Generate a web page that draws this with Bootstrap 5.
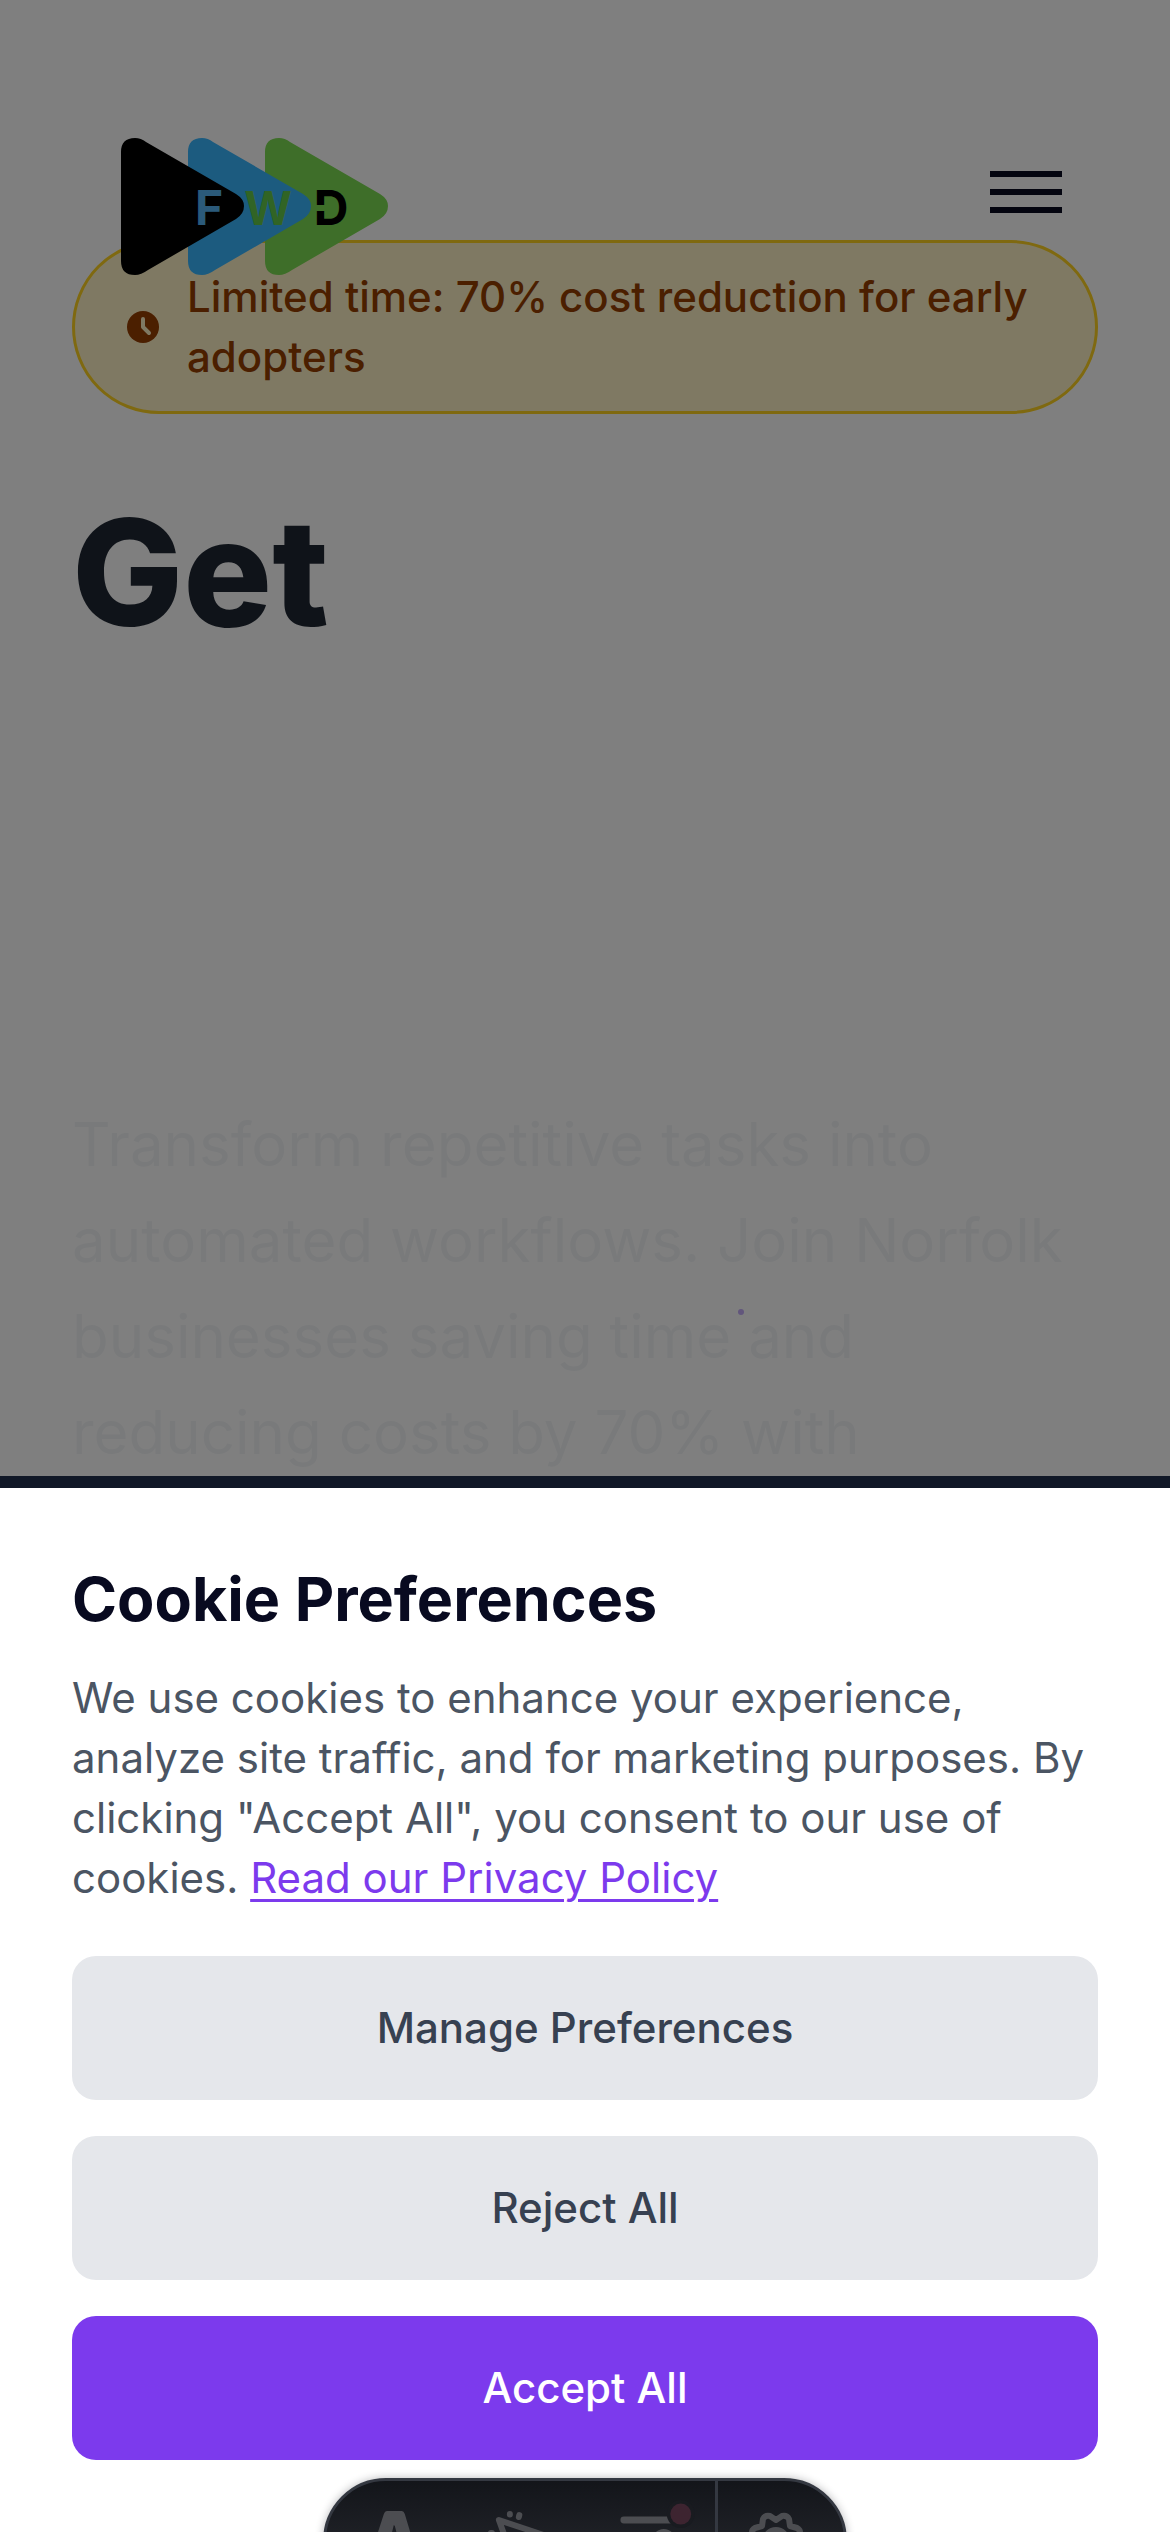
<!DOCTYPE html>
<html lang="en">
<head>
<meta charset="utf-8">
<meta name="viewport" content="width=device-width, initial-scale=1">
<title>FWD</title>
<link href="https://cdn.jsdelivr.net/npm/bootstrap@5.3.0/dist/css/bootstrap.min.css" rel="stylesheet">
<style>
  body { font-family: Inter, "Liberation Sans", sans-serif; font-size: 42px; line-height: 60px; background: #fff; min-height: 100vh; overflow: hidden; }
  .site-bar { padding: 137px 108px 0 120px; z-index: 5; }
  .brand-art { width: 269px; height: 139px; display: block; }
  .menu-btn { padding: 0; border: 0; background: none; gap: 12px; margin-top: 34px; }
  .menu-btn span { width: 72px; height: 6px; background: #080a20; }
  .page-main { padding: 240px 72px 0; }
  .offer-pill { border: 3px solid #ffd220; background: #fff3c7; color: #963e00; border-radius: 90px; padding: 24px 48px 24px 51px; gap: 27px; font-weight: 500; }
  .offer-pill svg { width: 34px; height: 34px; flex: none; }
  .hero-title { font-size: 148px; line-height: 158px; font-weight: 800; color: #1e2632; margin: 80px 0 444px; }
  .hero-copy { font-size: 60px; line-height: 96px; color: #f3f5f7; margin: 0; }
  .spark-dot { width: 6px; height: 6px; left: 738px; top: 1309px; background: #c4adf8; border-radius: 50%; }
  .dimmer { inset: 0; background: rgba(0,0,0,.5); z-index: 1031; }
  .cookie-panel { z-index: 1040; background: #fff; border-top: 12px solid #111827; padding: 72px; }
  .cookie-title { font-size: 61px; line-height: 78px; font-weight: 700; color: #080a20; margin: 0 0 30px; }
  .cookie-text { color: #4b5563; margin: 0 0 48px; }
  .cookie-text a { color: #7c3aed; text-decoration-thickness: 3px; text-underline-offset: 6px; }
  .choice-list { gap: 36px; }
  .choice-btn { height: 144px; font-size: 42px; line-height: 60px; font-weight: 500; border: 0; border-radius: 24px; background: #e5e7eb; color: #374151; }
  .choice-btn.accept { background: #7c3aed; color: #fff; }
  .dev-dock { height: 54px; z-index: 1050; }
  .dev-bar { width: 524px; height: 126px; flex: none; border: 3px solid #343841; border-radius: 63px; background: linear-gradient(180deg, #13151a, #2b2d33); box-shadow: 0 0 8px rgba(19,21,26,.3); }
  .dev-bar button { flex: 1 1 0; min-width: 0; padding: 0; border: 0; background: none; }
  .dev-bar .dev-last { flex: 0 0 129px; border-left: 3px solid #343841; }
  .dev-bar svg { width: 100%; height: 120px; display: block; }
</style>
</head>
<body>
<header class="site-bar position-absolute top-0 start-0 w-100 d-flex justify-content-between align-items-start">
  <a href="#" aria-label="FWD home">
    <svg class="brand-art" viewBox="120 137 269 139" font-family="Inter, sans-serif" font-size="48" text-anchor="middle">
      <defs><path id="play" d="M121 152 Q121 138 135 138 Q141 138 146 142 L236 194 Q244 199 244 206 Q244 214 236 219 L148 270 Q141 275 135 275 Q121 275 121 261 Z"/></defs>
      <use href="#play" x="144" fill="#7cdc52"/>
      <use href="#play" x="67" fill="#38b6ff"/>
      <use href="#play" fill="#000"/>
      <text x="209" y="225" font-weight="700" fill="#56b4f4">F</text>
      <text x="268" y="225" font-weight="700" font-size="46" fill="#62c84a">W</text>
      <text x="331" y="225" font-weight="700" fill="#000">D</text>
      <path d="M312 205 H326 V211 H312 Z" fill="#7cdc52"/>
    </svg>
  </a>
  <button class="menu-btn d-flex flex-column" type="button" aria-label="Open menu"><span></span><span></span><span></span></button>
</header>
<main class="page-main">
  <div class="offer-pill d-flex align-items-center">
    <svg viewBox="0 0 34 34" aria-hidden="true"><circle cx="17" cy="17" r="16" fill="#963e00"/><path d="M17 9 V17 L23 23" fill="none" stroke="#fff3c7" stroke-width="4" stroke-linecap="round" stroke-linejoin="round"/></svg>
    <span>Limited time: 70% cost reduction for early adopters</span>
  </div>
  <h1 class="hero-title">Get</h1>
  <p class="hero-copy">Transform repetitive tasks into automated workflows. Join Norfolk businesses saving time and reducing costs by 70% with</p>
</main>
<div class="spark-dot position-absolute"></div>
<div class="dimmer position-fixed"></div>
<section class="cookie-panel fixed-bottom">
  <h2 class="cookie-title">Cookie Preferences</h2>
  <p class="cookie-text">We use cookies to enhance your experience, analyze site traffic, and for marketing purposes. By clicking "Accept All", you consent to our use of cookies. <a href="#">Read our Privacy Policy</a></p>
  <div class="choice-list d-grid">
    <button class="btn choice-btn" type="button">Manage Preferences</button>
    <button class="btn choice-btn" type="button">Reject All</button>
    <button class="btn choice-btn accept" type="button">Accept All</button>
  </div>
</section>
<div class="dev-dock fixed-bottom d-flex justify-content-center align-items-start">
  <div class="dev-bar d-flex overflow-hidden">
    <button type="button" aria-label="Menu">
      <svg viewBox="326 2481 130 120" aria-hidden="true"><path d="M387 2511 H402 Q404 2511 405 2514 L417 2554 Q408 2549 401 2549 L395 2526 L394 2525 L388 2549 Q380 2549 371 2554 L384 2514 Q385 2511 387 2511 Z" fill="#4c4d51"/></svg>
    </button>
    <button type="button" aria-label="Inspect">
      <svg viewBox="456 2481 130 120" aria-hidden="true" fill="none" stroke="#4c4d51" stroke-linecap="round" stroke-linejoin="round"><path d="M499 2520 L544 2535 L526 2545 L515 2564 Z" stroke-width="6"/><path d="M510 2514 V2514.500 M519.500 2515 L519 2517 M491 2533 L492 2533" stroke-width="6"/></svg>
    </button>
    <button type="button" aria-label="Audit">
      <svg viewBox="586 2481 130 120" aria-hidden="true"><path d="M625 2520 H676" stroke="#4c4d51" stroke-width="7" stroke-linecap="round"/><circle cx="665" cy="2541" r="9" fill="none" stroke="#4c4d51" stroke-width="6"/><circle cx="682" cy="2514" r="14" fill="#191b20"/><circle cx="682" cy="2514" r="10.500" fill="#3d2430"/></svg>
    </button>
    <button class="dev-last" type="button" aria-label="Settings">
      <svg viewBox="718 2481 126 120" aria-hidden="true" fill="none" stroke="#4c4d51" stroke-width="6" stroke-linejoin="round"><path d="M776 2520 L782 2516 Q787 2515 789 2519 L790 2526 L797 2528 Q801 2530 800 2535 L796 2541 L800 2547 Q801 2552 797 2554 L790 2556 L789 2563 Q787 2567 782 2566 L776 2562 L770 2566 Q765 2567 763 2563 L762 2556 L755 2554 Q751 2552 752 2547 L756 2541 L752 2535 Q751 2530 755 2528 L762 2526 L763 2519 Q765 2515 770 2516 Z"/><circle cx="776" cy="2541" r="11"/></svg>
    </button>
  </div>
</div>
<script src="https://cdn.jsdelivr.net/npm/bootstrap@5.3.0/dist/js/bootstrap.bundle.min.js"></script>
</body>
</html>
